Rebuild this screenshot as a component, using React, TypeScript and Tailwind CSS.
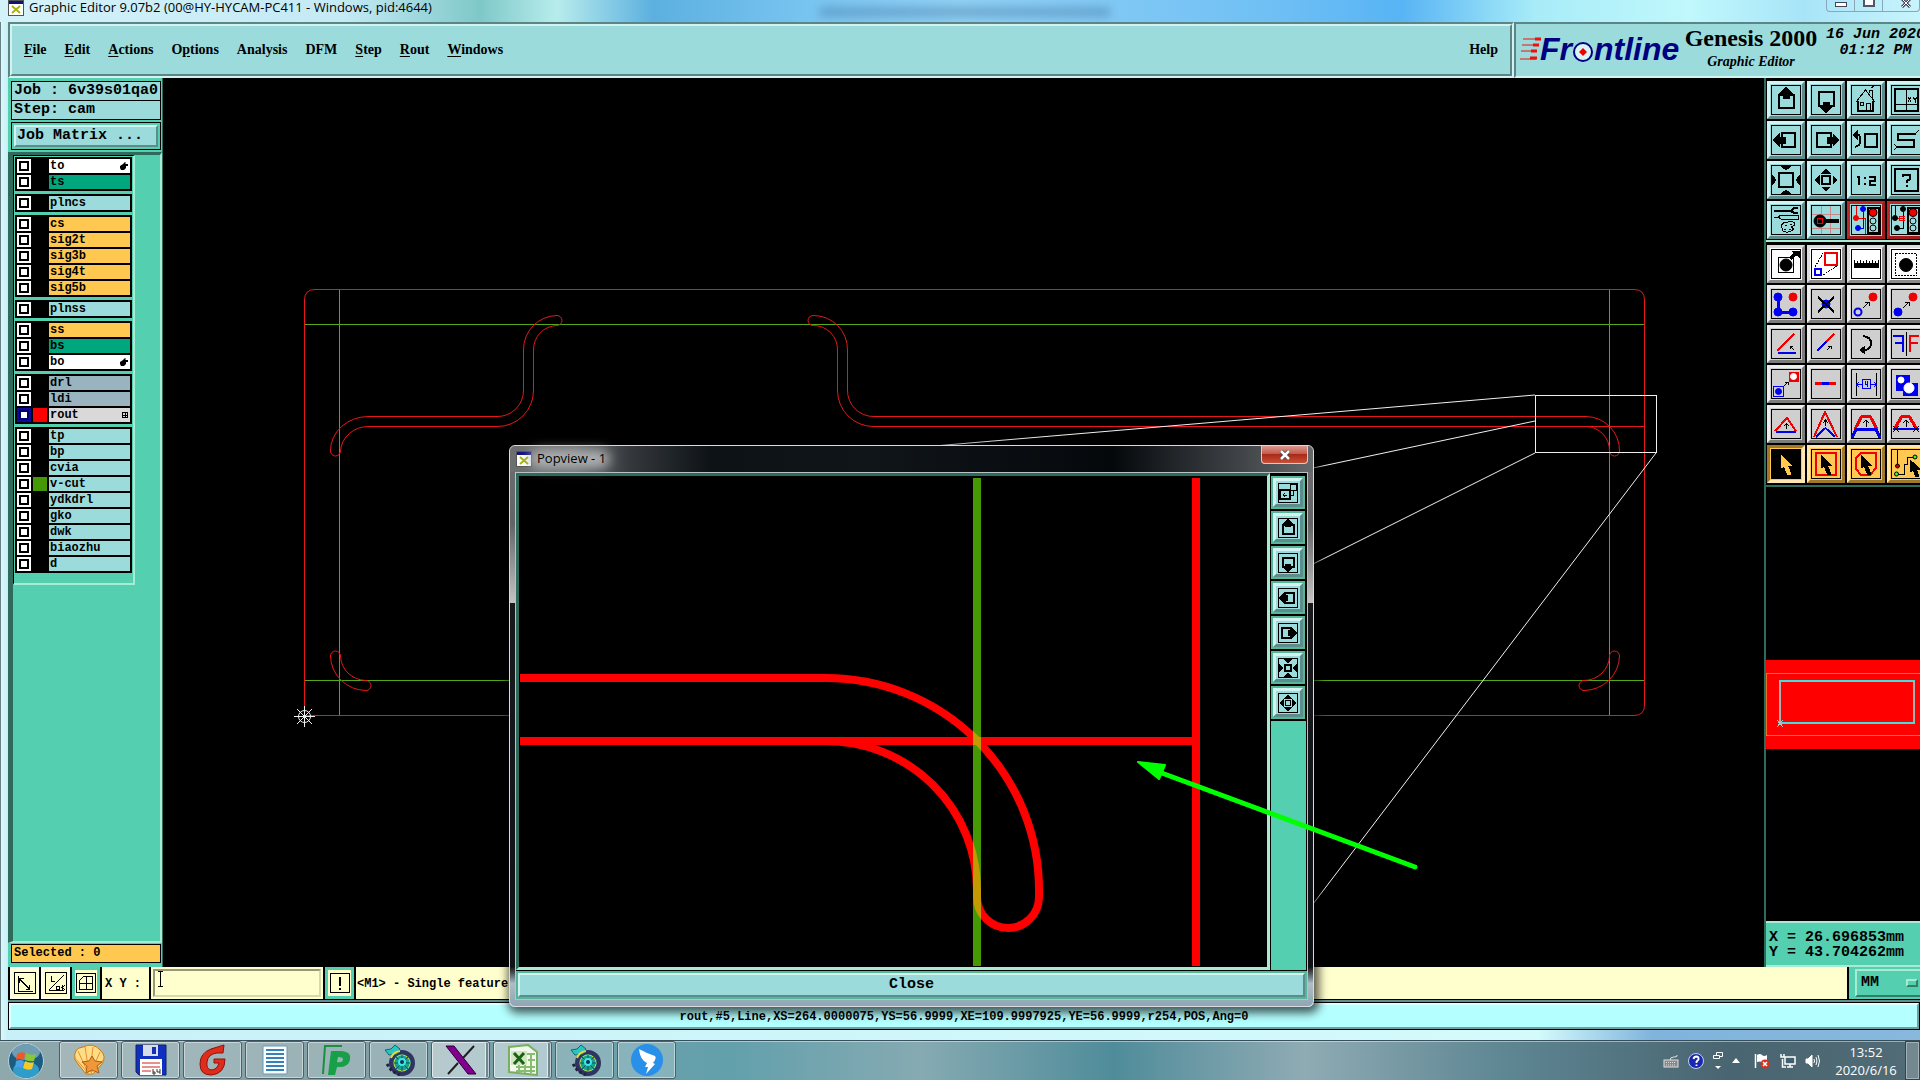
import type { ReactNode } from 'react';

type Tone = 'teal' | 'white' | 'gray' | 'red' | 'orange' | 'orangeDown';

const toneClass: Record<Tone, string> = {
  teal: 'bg-[#9bdbdb] border-t-[#d2f3f2] border-l-[#d2f3f2] border-b-[#5c8c8c] border-r-[#5c8c8c]',
  white: 'bg-white border-t-[#dcdcdc] border-l-[#dcdcdc] border-b-[#8a8a8a] border-r-[#8a8a8a]',
  gray: 'bg-[#cfcfcf] border-t-[#ededed] border-l-[#ededed] border-b-[#7c7c7c] border-r-[#7c7c7c]',
  red: 'bg-[#9bdbdb] border-t-[#c02828] border-l-[#c02828] border-b-[#a01c1c] border-r-[#a01c1c]',
  orange: 'bg-[#ffc850] border-t-[#ffe6b0] border-l-[#ffe6b0] border-b-[#a07828] border-r-[#a07828]',
  orangeDown: 'bg-[#ffc850] border-t-[#a07828] border-l-[#a07828] border-b-[#ffe6b0] border-r-[#ffe6b0]',
};

const RED = '#f00000';
const BLUE = '#0000f0';

const Icon = ({ children, className = 'h-8 w-8', fill = 'none' }: { children?: ReactNode; className?: string; fill?: string }) => (
  <svg
    viewBox="0 0 32 32"
    className={`[&_*]:[vector-effect:non-scaling-stroke] [&_circle]:[shape-rendering:auto] ${className}`}
    shapeRendering="crispEdges"
    fill="none"
    stroke="#000"
    strokeWidth="1"
    aria-hidden="true"
  >
    <rect x="1.5" y="1.5" width="29" height="29" fill={fill} />
    {children}
  </svg>
);

const PanUp = (
  <>
    <path d="M13 11H9V24H24V11H19" strokeWidth="2" />
    <path d="M16 3L22 9H19V14H13V9H10Z" fill="#000" />
  </>
);
const PanDown = (
  <>
    <path d="M13 22H9V8H24V22H19" strokeWidth="2" />
    <path d="M16 29L22 23H19V18H13V23H10Z" fill="#000" />
  </>
);
const PanLeft = (
  <>
    <path d="M12 13V9H25V23H12V19" strokeWidth="2" />
    <path d="M3 16L9 10V13H15V19H9V22Z" fill="#000" />
  </>
);
const PanRight = (
  <>
    <path d="M21 13V9H7V23H21V19" strokeWidth="2" />
    <path d="M29 16L23 10V13H17V19H23V22Z" fill="#000" />
  </>
);
const ZoomOut = (
  <>
    <rect x="9" y="9" width="14" height="14" strokeWidth="2" />
    <path d="M11 2H21L16 6ZM11 30H21L16 26ZM2 11V21L6 16ZM30 11V21L26 16Z" fill="#000" />
  </>
);
const ZoomIn = (
  <>
    <rect x="12" y="12" width="8" height="8" strokeWidth="2" />
    <path d="M16 5L20 9H12ZM16 27L20 23H12ZM5 16L9 12V20ZM27 16L23 12V20Z" fill="#000" />
  </>
);
const TrafficLight = (
  <>
    <rect x="17.5" y="3.5" width="11" height="25" strokeWidth="2" />
    <circle cx="23" cy="8.5" r="4" fill={RED} />
    <circle cx="23" cy="17" r="3" />
    <circle cx="23" cy="24" r="3" />
  </>
);
const Cursor = 'M11 7V20L14 18L18 27L21 26L17 17H21Z';

const viewTools: { name: string; tone?: Tone; fill?: string; art: ReactNode }[] = [
  { name: 'Pan up', art: PanUp },
  { name: 'Pan down', art: PanDown },
  {
    name: 'Home view',
    art: (
      <>
        <path d="M6 18L15.500 6L25 18M19 9V6H22V14M21 4L24 2" />
        <path d="M8 17V27H23V17" strokeWidth="2" />
        <path d="M16 27V19H20V27M10 18H13V21H10Z" />
      </>
    ),
  },
  {
    name: 'Coordinates view',
    art: (
      <>
        <rect x="5" y="5" width="23" height="22" strokeWidth="2" />
        <path d="M16.500 5V27M5 20.500H28" />
        <path d="M18 13l3 5m0-5l-3 5M23 13l2 3l2-3m-2 3v3" />
      </>
    ),
  },
  { name: 'Pan left', art: PanLeft },
  { name: 'Pan right', art: PanRight },
  {
    name: 'Previous view',
    art: (
      <>
        <rect x="15" y="10" width="12" height="13" strokeWidth="2" />
        <path d="M6 11H9Q12 16 9 21L5 23" strokeWidth="2" />
        <path d="M3 11L7 7V15Z" fill="#000" />
      </>
    ),
  },
  {
    name: 'Serpentine',
    art: (
      <>
        <path d="M26 10H8V16H24V23H7" strokeWidth="2" />
        <path d="M26 9L29 6M4 20L7 23L4 26" />
      </>
    ),
  },
  { name: 'Zoom out', art: ZoomOut },
  { name: 'Zoom in', art: ZoomIn },
  {
    name: 'Scale one to two',
    art: <path d="M7 13H9V21M14 13.500H16M14 19.500H16M19 13H25V17H20V21H26" strokeWidth="2" />,
  },
  {
    name: 'Query',
    art: (
      <>
        <rect x="5" y="5" width="23" height="22" strokeWidth="2" />
        <path d="M13 13V11H20V15L17 17V19M17 21V23" strokeWidth="2" />
      </>
    ),
  },
  {
    name: 'Setup',
    art: (
      <>
        <path d="M4 6.500H20M28 4H24L21 7L24 9H28" strokeWidth="2" />
        <path d="M4 13H8L11 11H28V15H11L8 13" />
        <path d="M12 24Q10 18 18 18Q26 17 25 21L21 23L24 25Q19 30 13 27Z" />
        <path d="M15 21H17M20 20H22M14 25H16M19 25H21" />
      </>
    ),
  },
  {
    name: 'Snap',
    art: (
      <>
        <path d="M11 2V30M20 2V30M2 10H30M2 24H30" stroke="#c88" />
        <circle cx="10" cy="17" r="6" fill="#000" />
        <path d="M16 17H29" strokeWidth="4" />
        <rect x="7.500" y="14.500" width="5" height="5" stroke={RED} />
      </>
    ),
  },
  {
    name: 'Net trace',
    tone: 'red',
    art: (
      <>
        <path d="M6 2V14H15V30" stroke={RED} />
        <path d="M13 5V24H8" stroke={BLUE} />
        <circle cx="6" cy="14" r="2.500" fill={RED} stroke={RED} />
        <circle cx="13" cy="5" r="2.500" fill={BLUE} stroke={BLUE} />
        <circle cx="8" cy="24" r="2.500" fill={BLUE} stroke={BLUE} />
        {TrafficLight}
      </>
    ),
  },
  {
    name: 'Net check',
    tone: 'red',
    art: (
      <>
        <path d="M5 2V14M13 5V24H7" />
        <path d="M7 14H9M9 12H15M9 14H15M9 16H15M9 12V16" stroke={RED} />
        <circle cx="5" cy="14" r="2.500" fill="#000" />
        <circle cx="13" cy="5" r="2.500" fill="#000" />
        <circle cx="7" cy="24" r="2.500" fill="#000" />
        {TrafficLight}
      </>
    ),
  },
];

const editTools: typeof viewTools = [
  {
    name: 'Select feature',
    tone: 'white',
    art: (
      <>
        <rect x="8.500" y="9.500" width="15" height="15" />
        <circle cx="16" cy="17" r="6" fill="#000" />
        <path d="M20 11L26 5" strokeWidth="3" />
        <path d="M22 3H29V9Z" fill="#000" />
      </>
    ),
  },
  {
    name: 'Copy scaled',
    tone: 'white',
    art: (
      <>
        <path d="M5 19L13 5M13 27L27 18" strokeDasharray="2 1" />
        <rect x="15" y="5" width="12" height="12" stroke={RED} strokeWidth="2" />
        <rect x="5" y="21" width="6" height="6" stroke={BLUE} strokeWidth="2" />
      </>
    ),
  },
  {
    name: 'Measure',
    tone: 'white',
    art: (
      <>
        <path d="M4 17.500H29" strokeWidth="5" />
        <path d="M4.500 12V16M28.500 12V16M7.500 13V16M10.500 12V16M13.500 13V16M16.500 12V16M19.500 13V16M22.500 12V16M25.500 13V16" />
      </>
    ),
  },
  {
    name: 'Select inside frame',
    tone: 'white',
    art: (
      <>
        <rect x="5.500" y="5.500" width="21" height="22" strokeDasharray="2 1" />
        <circle cx="16" cy="17" r="6.500" fill="#000" />
      </>
    ),
  },
  {
    name: 'Add chain',
    art: (
      <>
        <path d="M8 9V24H23" stroke={BLUE} strokeWidth="3" />
        <circle cx="8" cy="9" r="4" fill={BLUE} stroke={BLUE} />
        <circle cx="8" cy="24" r="4" fill={BLUE} stroke={BLUE} />
        <circle cx="23" cy="24" r="4" fill={BLUE} stroke={BLUE} />
        <circle cx="23" cy="9" r="4" fill={RED} stroke={RED} />
      </>
    ),
  },
  {
    name: 'Delete feature',
    art: (
      <>
        <circle cx="16" cy="16" r="4" fill={BLUE} stroke={BLUE} />
        <path d="M8 9L24 24M24 9L8 24" strokeWidth="2" />
      </>
    ),
  },
  {
    name: 'Move feature',
    art: (
      <>
        <circle cx="8" cy="24" r="3.500" stroke={BLUE} strokeWidth="2" />
        <circle cx="23" cy="9" r="4" fill={RED} stroke={RED} />
        <path d="M13 20L19 14M15 14H19V18" />
      </>
    ),
  },
  {
    name: 'Copy feature',
    art: (
      <>
        <circle cx="8" cy="24" r="4" fill={BLUE} stroke={BLUE} />
        <circle cx="23" cy="9" r="4" fill={RED} stroke={RED} />
        <path d="M13 20L19 14M15 14H19V18" />
      </>
    ),
  },
  {
    name: 'Rotate feature',
    art: (
      <>
        <path d="M7 23L24 6" stroke={RED} strokeWidth="2" />
        <path d="M8 25H26" stroke={BLUE} strokeWidth="2" />
        <path d="M24 22L20 18M20 21V18H23" />
      </>
    ),
  },
  {
    name: 'Stretch line',
    art: (
      <>
        <path d="M16 14L24 6" stroke={RED} strokeWidth="2" />
        <path d="M7 23L16 14" stroke={BLUE} strokeWidth="2" />
        <path d="M17 22L21 18M18 18H21V21" />
      </>
    ),
  },
  {
    name: 'Turn arc',
    art: (
      <>
        <path d="M13 8Q21 9 21 15Q21 22 14 22" strokeWidth="2" />
        <path d="M10 22L14 19V25Z" fill="#000" />
      </>
    ),
  },
  {
    name: 'Mirror feature',
    art: (
      <>
        <path d="M16.500 4V28" />
        <path d="M3 8H13V24M5 15H13" stroke={BLUE} strokeWidth="2" />
        <path d="M29 8H20V24M28 15H20" stroke={RED} strokeWidth="2" />
      </>
    ),
  },
  {
    name: 'Change symbol',
    art: (
      <>
        <rect x="19" y="4" width="9" height="9" fill={RED} stroke={RED} />
        <circle cx="23.500" cy="8.500" r="3" fill="#fff" stroke="#fff" />
        <rect x="3.500" y="18.500" width="10" height="10" stroke={BLUE} />
        <circle cx="8.500" cy="23.500" r="3" fill={BLUE} stroke={BLUE} />
        <path d="M14 18L18 14M15 14H18V17" />
      </>
    ),
  },
  {
    name: 'Break line',
    art: (
      <>
        <path d="M5 15.500H26" stroke={RED} strokeWidth="3" />
        <path d="M12 15.500H19" stroke={BLUE} strokeWidth="3" />
      </>
    ),
  },
  {
    name: 'Spacing',
    art: (
      <>
        <path d="M6.500 5V28M26.500 5V28" />
        <path d="M12.500 11.500H20.500V20.500H12.500ZM15.500 13V16.500H18M17.500 13V19M12 16.500H7M9 14L7 16.500L9 19M21 16.500H26M24 14L26 16.500L24 19" stroke={BLUE} />
      </>
    ),
  },
  {
    name: 'Polarity',
    art: (
      <>
        <path d="M6 7H19V15H27V27H13V22H6Z" fill={BLUE} stroke={BLUE} />
        <circle cx="11" cy="12" r="3" fill="#fff" stroke="#fff" />
        <circle cx="19" cy="20" r="5" fill="#fff" stroke="#fff" />
      </>
    ),
  },
  {
    name: 'Triangle corner',
    art: (
      <>
        <path d="M5 23L17 10L26 23" stroke={RED} strokeWidth="2" />
        <path d="M6 24H26" stroke={BLUE} strokeWidth="2" />
        <path d="M16.500 21V16M14 18L16.500 16L19 18" />
      </>
    ),
  },
  {
    name: 'Peak corner',
    art: (
      <>
        <path d="M4 29L15 4L27 29" stroke={RED} strokeWidth="2" />
        <path d="M6 29L15.500 20L25 29" stroke={BLUE} strokeWidth="2" />
        <path d="M15.500 18V12M13 15L15.500 12L18 15" />
      </>
    ),
  },
  {
    name: 'Trapeze spread',
    art: (
      <>
        <path d="M5 21L12 8H20L27 21" stroke={RED} strokeWidth="3" />
        <path d="M2 30L6 21H26L30 30" stroke={BLUE} strokeWidth="3" />
        <path d="M16 19V12M13 15L16 12L19 15" />
      </>
    ),
  },
  {
    name: 'Trapeze cut',
    art: (
      <>
        <path d="M5 20L12 8H19L26 20" stroke={RED} strokeWidth="3" />
        <path d="M3 21H29" stroke={BLUE} strokeWidth="2" />
        <path d="M16 19V12M13 15L16 12L19 15M3 18L9 24M9 18L3 24M23 18L29 24M29 18L23 24" />
      </>
    ),
  },
  {
    name: 'Select single',
    tone: 'orangeDown',
    fill: '#000',
    art: <path d={Cursor} fill="#ffc850" stroke="#ffc850" />,
  },
  {
    name: 'Select rectangle',
    tone: 'orange',
    art: (
      <>
        <rect x="6" y="5" width="20" height="22" stroke={RED} strokeWidth="2" />
        <path d={Cursor} fill="#000" />
      </>
    ),
  },
  {
    name: 'Select polygon',
    tone: 'orange',
    art: (
      <>
        <path d="M11 5H26V20L20 27H11L6 21V10Z" stroke={RED} strokeWidth="2" />
        <path d={Cursor} fill="#000" />
      </>
    ),
  },
  {
    name: 'Select net',
    tone: 'orange',
    art: (
      <>
        <path d="M7.500 2V17M7 26H14V16H17V9H25" />
        <circle cx="7.500" cy="18" r="2" fill="#c00" />
        <circle cx="6.500" cy="26" r="2" fill="#3f3" />
        <circle cx="25" cy="9" r="2" fill="#3f3" />
        <path d="M20 12V24L23 22L26 29L29 28L26 21H30Z" fill="#000" />
      </>
    ),
  },
];

type Layer = { name: string; color: string; swatch?: string; mark?: 'hand' | 'grid'; active?: boolean };

const AQUA = 'bg-[#9bdbdb]';
const AMBER = 'bg-[#ffc850]';
const GREEN = 'bg-[#00a67d]';
const SLATE = 'bg-[#9ab4bf]';

const layerGroups: Layer[][] = [
  [
    { name: 'to', color: 'bg-white', mark: 'hand' },
    { name: 'ts', color: GREEN },
  ],
  [{ name: 'plncs', color: AQUA }],
  [
    { name: 'cs', color: AMBER },
    { name: 'sig2t', color: AMBER },
    { name: 'sig3b', color: AMBER },
    { name: 'sig4t', color: AMBER },
    { name: 'sig5b', color: AMBER },
  ],
  [{ name: 'plnss', color: AQUA }],
  [
    { name: 'ss', color: AMBER },
    { name: 'bs', color: GREEN },
    { name: 'bo', color: 'bg-white', mark: 'hand' },
  ],
  [
    { name: 'drl', color: SLATE },
    { name: 'ldi', color: SLATE },
    { name: 'rout', color: 'bg-[#d9d9d9]', swatch: 'bg-[#ff0000]', mark: 'grid', active: true },
  ],
  [
    { name: 'tp', color: AQUA },
    { name: 'bp', color: AQUA },
    { name: 'cvia', color: AQUA },
    { name: 'v-cut', color: AQUA, swatch: 'bg-[#449905]' },
    { name: 'ydkdrl', color: AQUA },
    { name: 'gko', color: AQUA },
    { name: 'dwk', color: AQUA },
    { name: 'biaozhu', color: AQUA },
    { name: 'd', color: AQUA },
  ],
];

const LayerRow = ({ layer }: { layer: Layer }) => (
  <label className="flex h-[14px] items-center gap-[2px]">
    <input
      type="checkbox"
      className={`h-[14px] w-[14px] shrink-0 appearance-none border-2 bg-white ${
        layer.active ? 'border-[#0a0a9c] shadow-[inset_0_0_0_2px_#00006c]' : 'border-white shadow-[inset_0_0_0_2px_#000]'
      }`}
    />
    <span className={`h-[14px] w-[14px] shrink-0 ${layer.swatch ?? 'bg-black'}`} />
    <span className={`flex h-[14px] flex-1 items-center justify-between pr-[2px] pl-px text-[12px] leading-[14px] font-bold ${layer.color}`}>
      {layer.name}
      {layer.mark === 'hand' && (
        <svg viewBox="0 0 8 8" className="h-2 w-2" aria-hidden="true">
          <path d="M0 4L3 2L5 0L6 1L5 2H8V4H6V6L4 8H1L0 6Z" />
        </svg>
      )}
      {layer.mark === 'grid' && (
        <svg viewBox="0 0 6 6" className="h-[6px] w-[6px]" shapeRendering="crispEdges" fill="none" stroke="#000" aria-hidden="true">
          <path d="M.5.5H5.500V5.500H.5ZM3 0V6M0 3H6" />
        </svg>
      )}
    </span>
  </label>
);

const Sidebar = () => (
  <aside className="flex w-[155px] shrink-0 flex-col border-r border-[#2f6b5c] bg-[#54cfaf] pt-[3px] font-['Liberation_Mono',monospace] text-[15px] font-bold whitespace-nowrap">
    <div className="mr-px ml-[3px] border border-black bg-[#9bdbdb] pl-[2px] leading-[18px]">Job : 6v39s01qa0</div>
    <div className="mr-px ml-[3px] border border-t-0 border-black bg-[#9bdbdb] pl-[2px] leading-[18px]">Step: cam</div>
    <div className="mt-[2px] mr-px ml-[3px] border border-black p-[2px]">
      <button className="block h-[22px] w-full border-2 border-t-[#d2f3f2] border-r-[#5c8c8c] border-b-[#5c8c8c] border-l-[#d2f3f2] bg-[#9bdbdb] pl-px text-left leading-[18px]">
        Job Matrix ...
      </button>
    </div>
    <div className="mt-[2px] flex flex-1 flex-col border-t-[3px] border-r-2 border-b-2 border-l-[5px] border-t-[#2f6b5c] border-r-[#a8ead2] border-b-[#a8ead2] border-l-[#2f6b5c]">
      <div className="mr-[25px] flex flex-col gap-[3px] border-t border-r-2 border-b-2 border-l border-t-black border-r-[#a8ead2] border-b-[#a8ead2] border-l-black px-px pt-px pb-[10px]">
        {layerGroups.map((group, i) => (
          <div key={i} className="flex flex-col gap-[2px] bg-black p-[2px]">
            {group.map((layer) => (
              <LayerRow key={layer.name} layer={layer} />
            ))}
          </div>
        ))}
      </div>
    </div>
    <div className="mt-px mr-px mb-1 ml-[3px] border border-black bg-[#ffc850] pl-[2px] text-[12px] leading-[17px]">Selected : 0</div>
  </aside>
);

const menus: [string, string, string][] = [
  ['', 'F', 'ile'],
  ['', 'E', 'dit'],
  ['', 'A', 'ctions'],
  ['O', 'p', 'tions'],
  ['Analysis', '', ''],
  ['DFM', '', ''],
  ['', 'S', 'tep'],
  ['', 'R', 'out'],
  ['', 'W', 'indows'],
];

const Header = () => (
  <header className="flex h-14 shrink-0 font-['Liberation_Serif',serif] font-bold">
    <div className="flex-1 border-2 border-t-[#5c8585] border-r-[#d2f3f2] border-b-[#d2f3f2] border-l-[#5c8585]">
      <nav className="flex h-full items-center justify-between border-2 border-t-[#d2f3f2] border-r-[#5c8585] border-b-[#5c8585] border-l-[#d2f3f2] bg-[#9bdbdb] px-3 pb-[2px] text-[14px]">
        <div className="flex gap-[18px]">
          {menus.map(([before, key, after]) => (
            <button key={before + key + after}>
              {before}
              <span className="underline underline-offset-2">{key}</span>
              {after}
            </button>
          ))}
        </div>
        <button>Help</button>
      </nav>
    </div>
    <div className="flex w-[406px] shrink-0 gap-1 overflow-hidden border-t-2 border-b-2 border-l-2 border-t-[#5c8585] border-b-[#d2f3f2] border-l-[#5c8585] bg-[#9bdbdb] pl-1">
      <svg viewBox="0 0 160 52" className="h-[52px] w-40 shrink-0" role="img" aria-label="Frontline">
        <g stroke="#f01010" strokeWidth="1">
          <path d="M3 15H20M2 21H18M1 27H17M0 35H16" />
          <path d="M15 15H21M13 21H19M11 27H17M10 34H17" strokeWidth="3" />
        </g>
        <g fill="#000080" fontFamily="Liberation Sans, sans-serif" fontWeight="bold" fontStyle="italic" fontSize="32">
          <text x="20" y="36">
            Fr
          </text>
          <text x="74" y="36">
            ntline
          </text>
        </g>
        <circle cx="63" cy="28" r="9" fill="#d8f4f4" stroke="#000080" strokeWidth="2" />
        <path d="M63 24L67 28L63 32L59 28Z" fill="#f00000" />
      </svg>
      <div className="w-[134px] shrink-0 text-center">
        <div className="text-[24px] leading-7">Genesis 2000</div>
        <div className="text-[14px] leading-5 italic">Graphic Editor</div>
      </div>
      <div className="shrink-0 pt-[3px] pl-1 text-center font-['Liberation_Mono',monospace] text-[15px] leading-4 italic">
        <div>16 Jun 2020</div>
        <div>01:12 PM</div>
      </div>
    </div>
  </header>
);

const ToolGrid = ({ tools, tone }: { tools: typeof viewTools; tone: Tone }) => (
  <div className="grid grid-cols-[repeat(4,38px)] gap-[2px]">
    {tools.map((tool) => (
      <button key={tool.name} title={tool.name} className={`h-[38px] w-[38px] border-[3px] ${toneClass[tool.tone ?? tone]}`}>
        <Icon fill={tool.fill}>{tool.art}</Icon>
      </button>
    ))}
  </div>
);

const RightPanel = () => (
  <aside className="flex w-[156px] shrink-0 flex-col overflow-hidden border-l-2 border-[#2f6b5c] bg-black">
    <div className="border-b-2 border-[#a8ead2] pt-[3px] pb-px pl-px">
      <ToolGrid tools={viewTools} tone="teal" />
    </div>
    <div className="border-b-2 border-[#2f6b5c] pt-[3px] pb-[2px] pl-px">
      <ToolGrid tools={editTools} tone="gray" />
    </div>
    <div className="flex flex-1 items-center">
      <svg viewBox="0 0 154 89" className="h-[89px] w-[154px] shrink-0" shapeRendering="crispEdges" fill="none" aria-hidden="true">
        <rect width="154" height="89" fill="#ff0000" />
        <path d="M154 13.500H.5V75.500H154" stroke="#e07820" />
        <path d="M14 21V62M148 21V62" stroke="#b0b0b0" strokeWidth="2" />
        <path d="M13 21H149M13 63H149" stroke="#40e0e0" strokeWidth="2" />
        <path d="M11 60L17 67M17 60L11 67" stroke="#c0c0c0" />
      </svg>
    </div>
    <div className="h-[46px] border-t-2 border-b-2 border-[#a8ead2] bg-[#54cfaf] pt-[7px] pl-[3px] font-['Liberation_Mono',monospace] text-[15px] leading-[15px] font-bold whitespace-pre">
      <div>X = 26.696853mm</div>
      <div>Y = 43.704262mm</div>
    </div>
  </aside>
);

const Canvas = () => (
  <main className="relative min-w-0 flex-1 bg-black">
    <svg viewBox="163 78 1601 889" preserveAspectRatio="none" className="absolute inset-0 h-full w-full" fill="none" aria-hidden="true">
      <g stroke="#55a818">
        <path d="M304 324.500H1645M304 680.500H1645M339.500 289V716M1609.500 289V716" />
      </g>
      <g stroke="#e81818">
        <path d="M304.500 716V300Q304.500 289.500 315 289.500H1634Q1644.500 289.500 1644.500 300V705Q1644.500 715.500 1634 715.500H304.500" />
        <path d="M369 416.500H497A26 26 0 0 0 523.500 390V350A34 34 0 0 1 557 315.500A5 5 0 0 1 557 325.500A24 24 0 0 0 533.500 350V390A36 36 0 0 1 497 426.500H369A28 26 0 0 0 340.500 451A5 5 0 0 1 330.500 451A38 34 0 0 1 369 416.500" />
        <path d="M1586 416.500H874A26 26 0 0 1 847.500 390V350A34 34 0 0 0 813 315.500A5 5 0 0 0 813 325.500A24 24 0 0 1 837.500 350V390A36 36 0 0 0 874 426.500H1645" />
        <path d="M1586 416.500A34 34 0 0 1 1619.500 451A5 5 0 0 1 1609.500 451A24 24 0 0 0 1586 426.500" />
        <path d="M330.500 656A36 35 0 0 0 366 690.500A5 5 0 0 0 366 680.500A26 25 0 0 1 340.500 656A5 5 0 0 0 330.500 656Z" />
        <path d="M1619.500 656A36 35 0 0 1 1584 690.500A5 5 0 0 1 1584 680.500A26 25 0 0 0 1609.500 656A5 5 0 0 1 1619.500 656Z" />
      </g>
      <g stroke="#f0f0f0">
        <rect x="1535.500" y="395.500" width="121" height="57" />
        <path d="M1535 395L510 482M1535 421L1313 468M1535 453L1313 564M1656 453L1313 904" />
        <circle cx="304.500" cy="716.500" r="6" />
        <path d="M294 716.500H315M304.500 706V727M297 709L312 724M312 709L297 724" />
      </g>
    </svg>
  </main>
);

const CommandBar = () => (
  <div className="flex h-[33px] shrink-0 gap-[2px] border-b border-black bg-black pl-[2px] font-['Liberation_Mono',monospace] text-[12px] font-bold">
    <button title="Absolute" className="h-8 w-[29px] shrink-0 border-2 border-[#fffff0] bg-[#ffffce]">
      <Icon className="mx-auto h-6 w-6">
        <path d="M8 10L22 24M8 16V10H14M17 24H22V19M7 6V27H27" />
      </Icon>
    </button>
    <button title="Angle" className="h-8 w-[29px] shrink-0 border-2 border-[#fffff0] bg-[#ffffce]">
      <Icon className="mx-auto h-6 w-6">
        <path d="M6 26L26 6M6 26H26M10 7V14H14M17 20H21V24H17ZM24 19V25M28 19L24 22L28 25" />
      </Icon>
    </button>
    <button title="Grid" className="h-8 w-7 shrink-0 border-[3px] border-[#54cfaf] bg-[#ffffce]">
      <Icon className="mx-auto h-[22px] w-[22px]">
        <path d="M7 25V12L13 6H26V25ZM16 6V25M7 16H26" />
      </Icon>
    </button>
    <label htmlFor="xy" className="h-8 w-[47px] shrink-0 bg-[#ffffce] pl-[3px] leading-[34px] whitespace-pre">
      X Y :
    </label>
    <div className="relative h-8 w-[172px] shrink-0 bg-[#ffffce] p-[2px]">
      <input
        id="xy"
        className="h-7 w-full border-2 border-t-[#99997a] border-r-[#d8d8a8] border-b-[#d8d8a8] border-l-[#99997a] bg-[#ffffce] px-2 outline-none"
      />
      <svg viewBox="0 0 7 16" className="absolute top-1 left-[6px] h-4 w-[7px]" stroke="#000" fill="none" shapeRendering="crispEdges" aria-hidden="true">
        <path d="M1 .5H6M3.500 1V15M1 15.500H6" />
      </svg>
    </div>
    <button title="Alert" className="h-8 w-[29px] shrink-0 border-[3px] border-[#54cfaf] bg-[#ffffce]">
      <Icon className="mx-auto h-[22px] w-[22px]">
        <path d="M16 7V20M16 23V26" strokeWidth="2" />
      </Icon>
    </button>
    <div className="h-8 flex-1 bg-[#ffffce] pl-px leading-[34px]">&lt;M1&gt; - Single feature</div>
    <div className="relative h-8 w-[71px] shrink-0 overflow-hidden bg-[#54cfaf] pt-[2px] pl-[6px]">
      <select
        aria-label="Units"
        className="h-7 w-20 appearance-none border-2 border-t-[#a8ead2] border-r-[#2f7f68] border-b-[#2f7f68] border-l-[#a8ead2] bg-[#54cfaf] pl-1 text-[15px]"
      >
        <option>MM</option>
      </select>
      <span className="absolute top-3 right-[2px] h-2 w-3 border-2 border-t-[#a8ead2] border-r-[#2f7f68] border-b-[#2f7f68] border-l-[#a8ead2]" />
    </div>
  </div>
);

const StatusBar = () => (
  <div className="h-[30px] shrink-0 border-t-2 border-[#5f8f8f] bg-[#b4ffff]">
    <div className="h-7 border border-black">
      <div className="h-full border-2 border-t-[#dcffff] border-r-[#6f9f9f] border-b-[#6f9f9f] border-l-[#dcffff] pt-[3px] text-center font-['Liberation_Mono',monospace] text-[12px] leading-[18px] font-bold">
        rout,#5,Line,XS=264.0000075,YS=56.9999,XE=109.9997925,YE=56.9999,r254,POS,Ang=0
      </div>
    </div>
  </div>
);

const XIcon = () => (
  <svg viewBox="0 0 16 16" className="h-4 w-4 shrink-0" aria-hidden="true">
    <rect x=".5" y=".5" width="15" height="15" fill="#fff" stroke="#555" />
    <rect x="1" y="1" width="14" height="3" fill="#101080" />
    <path d="M4 6L12 13M12 6L4 13" stroke="#a8b410" strokeWidth="2" />
  </svg>
);

const popTools = [
  {
    name: 'Detach view',
    art: (
      <>
        <rect x="5" y="12" width="14" height="13" strokeWidth="2" />
        <rect x="20" y="4" width="8" height="8" />
        <path d="M19 19H24V12M9 19H15M12 16L9 19L12 22" />
      </>
    ),
  },
  { name: 'Popview pan up', art: PanUp },
  { name: 'Popview pan down', art: PanDown },
  { name: 'Popview pan left', art: PanLeft },
  { name: 'Popview pan right', art: PanRight },
  {
    name: 'Popview zoom out',
    art: (
      <>
        <rect x="12" y="12" width="8" height="8" strokeWidth="2" />
        <path d="M10 3H22L16 8ZM10 29H22L16 24ZM3 10V22L8 16ZM29 10V22L24 16Z" fill="#000" />
      </>
    ),
  },
  {
    name: 'Popview zoom in',
    art: (
      <>
        <rect x="12" y="12" width="8" height="8" />
        <path d="M16 4L21 9H11ZM16 28L21 23H11ZM4 16L9 11V21ZM28 16L23 11V21Z" fill="#000" />
      </>
    ),
  },
];

const routLoop = 'M520 678H826A213 212 0 0 1 1039 890V897A31 31 0 0 1 977 897V890A151 149 0 0 0 826 741';

const Popview = () => (
  <section className="absolute top-[445px] left-[509px] flex h-[562px] w-[805px] flex-col rounded-md border border-[#d8dcde] bg-[linear-gradient(180deg,#6c6e70_0%,#626466_14%,#c4c4c4_28%,#17191d_28%,#0e1216_93%,#aebdc8_96%,#8fa6b4_100%)] px-[5px] shadow-[2px_3px_10px_3px_rgba(0,0,0,0.65)]">
    <div className="relative -mx-[5px] flex h-[26px] shrink-0 items-center rounded-t-md bg-[linear-gradient(90deg,#6c6e70_0%,#6c6e70_8%,#34383c_15%,#0d1216_25%,#10151a_45%,#05080b_75%,#3c4044_90%,#66696b_100%)] pl-[6px]">
      <div className="absolute top-1 left-5 h-[18px] w-20 rounded-full bg-[#b0b2b4] blur-[6px]" />
      <XIcon />
      <h1 className="relative ml-[5px] flex-1 text-[13px]">Popview - 1</h1>
      <button
        aria-label="Close window"
        className="mr-[5px] flex h-[18px] w-[47px] items-center justify-center self-start rounded-b border border-t-0 border-[#e8c8c0] bg-[linear-gradient(180deg,#d8988c_0%,#c4584a_48%,#a82a18_50%,#c85038_100%)]"
      >
        <svg viewBox="0 0 12 10" className="h-[10px] w-3" aria-hidden="true">
          <path d="M2 1L10 9M10 1L2 9" stroke="#444" strokeWidth="4" />
          <path d="M2 1L10 9M10 1L2 9" stroke="#fff" strokeWidth="2.500" />
        </svg>
      </button>
    </div>
    <div className="mb-[6px] flex flex-1 flex-col border border-[#b8c4c4] bg-black">
      <div className="flex flex-1">
        <div className="relative flex-1 border-[3px] border-t-[#2f6b5c] border-r-[#a8ead2] border-b-[#a8ead2] border-l-[#2f6b5c]">
          <svg viewBox="519 476 748 491" preserveAspectRatio="none" className="absolute inset-0 h-full w-full" fill="none" strokeWidth="8" aria-hidden="true">
            <defs>
              <clipPath id="vcut">
                <rect x="973" y="478" width="8" height="488" />
              </clipPath>
            </defs>
            <path d="M520 741H1196M1196 478V966" stroke="#ff0000" />
            <path d={routLoop} stroke="#ff0000" />
            <path d="M977 478V966" stroke="#449905" />
            <g clipPath="url(#vcut)" stroke="#c49a00">
              <path d={routLoop} />
              <path d="M520 741H1196" />
            </g>
          </svg>
        </div>
        <div className="ml-px flex w-[36px] flex-col gap-[2px] pt-[3px] pr-[2px]">
          {popTools.map((tool) => (
            <button key={tool.name} title={tool.name} className="h-[33px] w-[34px] shrink-0 border-2 border-[#54b898]">
              <span className={`flex h-full w-full items-center justify-center border-[3px] ${toneClass.teal}`}>
                <Icon className="h-[22px] w-[22px] shrink-0">{tool.art}</Icon>
              </span>
            </button>
          ))}
          <div className="w-[35px] flex-1 bg-[#54cfaf]" />
        </div>
      </div>
      <div className="mt-px border-2 border-[#54b898]">
        <button className="block h-6 w-full border-2 border-t-[#d2f3f2] border-r-[#5c8c8c] border-b-[#5c8c8c] border-l-[#d2f3f2] bg-[#9bdbdb] font-['Liberation_Mono',monospace] text-[15px] leading-5 font-bold">
          Close
        </button>
      </div>
    </div>
  </section>
);

const Gear = (
  <>
    <circle cx="19" cy="19" r="11" fill="#187078" stroke="#303460" strokeWidth="4" />
    <path d="M2 6L8 5L12 1L17 5L14 10L6 11Z" fill="#2cc4c0" stroke="#0b6b70" />
    <path d="M8 14Q10 8 17 7" stroke="#e8d840" strokeWidth="2" />
    <circle cx="19" cy="19" r="8" fill="#18a090" stroke="#b8d848" />
    <path d="M19 11V27M11 19H27M13 13L25 25M25 13L13 25" stroke="#0c5860" />
    <circle cx="19" cy="18" r="3" fill="#103060" stroke="#40e8e0" strokeWidth="2" />
    <path d="M4 20L9 27L17 31" stroke="#282040" strokeWidth="3" strokeDasharray="3 2" />
  </>
);

const taskIcons: { name: string; active?: boolean; art: ReactNode }[] = [
  {
    name: 'Shell',
    art: (
      <>
        <path d="M2 16Q0 4 10 3Q20 -2 27 6Q34 12 29 20L20 30H13Z" fill="#ffdc88" stroke="#c87810" />
        <path d="M15 29L2 14M15 29L5 7M16 28L12 3M17 28L20 3M18 28L27 8M18 29L31 15" stroke="#e89028" />
        <path d="M19 12L22 17L29 18L24 22L26 29L19 26L13 29L14 22L9 18L16 17Z" fill="#f09838" stroke="#b05c18" />
      </>
    ),
  },
  {
    name: 'Total Commander',
    art: (
      <>
        <path d="M1 1H31V31H4L1 28Z" fill="#1030c0" stroke="#102060" />
        <rect x="8" y="1" width="15" height="11" fill="#d8dce4" />
        <rect x="17" y="3" width="4" height="7" fill="#1030c0" />
        <rect x="5" y="15" width="22" height="16" fill="#fff" />
        <path d="M7 19H25M7 23H25M7 27H16" stroke="#d02020" />
        <path d="M18 25V30H20V28H18M22 25V28H25M25 25V30" stroke="#333" />
      </>
    ),
  },
  {
    name: 'G drawing',
    art: <path d="M27 1L14 5Q3 9 3 20Q3 31 14 31Q28 30 28 15H17V19H22Q20 26 14 26Q9 25 10 18Q11 10 20 9L26 9Z" fill="#e02c1c" stroke="#8c1408" />,
  },
  {
    name: 'Notepad',
    art: (
      <>
        <rect x="4" y="2" width="24" height="28" rx="1" fill="#f8fcff" stroke="#6898b0" />
        <path d="M7 6H25M7 10H25M7 14H25M7 18H25M7 22H25M7 26H25" stroke="#3880b8" strokeWidth="2" />
      </>
    ),
  },
  {
    name: 'P planner',
    art: (
      <>
        <path d="M2 30L4 2H21" stroke="#189040" strokeWidth="2" />
        <path d="M7 31L10 7H21Q31 8 29 16Q27 24 16 23L14 31ZM17 13L16 18Q22 19 22 15Q22 13 17 13Z" fill="#18a048" fillRule="evenodd" />
      </>
    ),
  },
  { name: 'CAM gear', art: Gear },
  {
    name: 'X server',
    active: true,
    art: (
      <>
        <path d="M1 2H9L31 30H23Z" fill="#800090" stroke="#300030" />
        <path d="M29 2L18 14M13 19L3 30" stroke="#202020" strokeWidth="2" />
      </>
    ),
  },
  {
    name: 'Excel',
    active: true,
    art: (
      <>
        <path d="M2 3L21 1L30 8V31L2 28Z" fill="#f2f8ee" stroke="#78b060" strokeWidth="2" />
        <path d="M15 10H28M9 23H28M9 27H28M21 16H28M12 21V29M18 21V29M24 10V29" stroke="#88bc70" strokeWidth="2" />
        <rect x="4" y="7" width="16" height="14" fill="#cfe6c0" />
        <path d="M7 9L17 20M17 9L7 20" stroke="#1c6018" strokeWidth="3" />
      </>
    ),
  },
  { name: 'CAM gear second', art: Gear },
  {
    name: 'DingTalk',
    art: (
      <>
        <circle cx="16" cy="16" r="16" fill="#2890e8" />
        <path d="M8 5Q15 9 24 12Q26 14 22 19L24 20L15 30L17 23H14L16 19Q9 16 8 5Z" fill="#fff" />
      </>
    ),
  },
];

const Taskbar = () => (
  <footer className="flex h-10 shrink-0 items-stretch border-t border-[#38505c] bg-[linear-gradient(90deg,#8fa8ac_0%,#7f9fa5_20%,#62a0ac_38%,#86aab2_48%,#4f8c9a_58%,#8fabb4_68%,#5f8794_78%,#496571_90%,#516c76_100%)] pl-[8px] font-['Open_Sans',sans-serif] shadow-[inset_0_1px_0_rgba(255,255,255,0.45)]">
    <button aria-label="Start" className="mr-[14px] w-[37px]">
      <svg viewBox="0 0 37 38" className="h-[38px] w-[37px]" aria-hidden="true">
        <circle cx="18" cy="19" r="17.500" fill="#1c5c80" stroke="#b8d4dc" />
        <ellipse cx="18" cy="28" rx="13" ry="8" fill="#38b8e8" opacity=".7" />
        <ellipse cx="18" cy="10" rx="14" ry="8" fill="#a8c8d4" opacity=".6" />
        <path d="M9 12Q13 9 17 11L16 18Q12 16 8 18Z" fill="#f05828" />
        <path d="M18 11Q23 14 28 12L26 19Q22 20 17 18Z" fill="#88c838" />
        <path d="M8 19Q12 17 16 19L14 26Q11 24 7 26Z" fill="#48a0e8" />
        <path d="M17 19Q22 22 26 20L24 27Q20 29 15 26Z" fill="#f8c828" />
      </svg>
    </button>
    <div className="flex flex-1 gap-[3px] pb-px">
      {taskIcons.map((app) => (
        <button
          key={app.name}
          aria-label={app.name}
          className={`flex w-[59px] items-center justify-center rounded-[3px] border border-[#4b6068] ${
            app.active
              ? 'bg-white/45 shadow-[inset_0_0_0_1px_rgba(255,255,255,0.6),inset_-3px_0_0_0_#6f868e,inset_-4px_0_0_0_rgba(255,255,255,0.6)]'
              : 'bg-white/20 shadow-[inset_0_0_0_1px_rgba(255,255,255,0.45)]'
          }`}
        >
          <svg viewBox="0 0 32 32" className="h-8 w-8" fill="none" aria-hidden="true">
            {app.art}
          </svg>
        </button>
      ))}
    </div>
    <div className="flex items-center gap-[9px] text-white">
      <svg viewBox="0 0 16 14" className="h-[14px] w-4" fill="none" stroke="#e0e0e0" aria-hidden="true">
        <rect x="1" y="6" width="14" height="7" fill="#888" />
        <path d="M3 8.500H13M3 11H13" strokeDasharray="1 1" />
        <path d="M7 6Q7 3 11 3T14 1" />
      </svg>
      <svg viewBox="0 0 16 16" className="h-4 w-4" aria-hidden="true">
        <circle cx="8" cy="8" r="7.500" fill="#1828b0" stroke="#c8d0f0" />
        <path d="M5.500 6Q6 3.500 8.500 3.500Q11 4 10.500 6.500L8.500 8.500V10M8.500 11.500V13" stroke="#fff" strokeWidth="1.800" fill="none" />
      </svg>
      <svg viewBox="0 0 10 18" className="h-[18px] w-[10px]" fill="none" stroke="#fff" aria-hidden="true">
        <path d="M3.500 3V.5H9.500V4.500H7M.5 3.500H6.500V6.500H.5Z" />
        <path d="M2 14H8L5 17Z" fill="#fff" stroke="none" />
      </svg>
      <svg viewBox="0 0 8 5" className="h-[5px] w-2" aria-hidden="true">
        <path d="M0 5L4 0L8 5Z" fill="#fff" />
      </svg>
      <svg viewBox="0 0 18 16" className="ml-1 h-4 w-[18px]" aria-hidden="true">
        <path d="M2.500 1V15" stroke="#fff" strokeWidth="1.500" />
        <path d="M4 2Q7 0 9 2T14 2V9Q11 10 9 9T4 9Z" fill="#fff" />
        <circle cx="12" cy="11" r="4.500" fill="#d83020" />
        <path d="M10 9L14 13M14 9L10 13" stroke="#fff" strokeWidth="1.500" />
      </svg>
      <svg viewBox="0 0 16 15" className="h-[15px] w-4" fill="none" stroke="#fff" strokeWidth="1.500" aria-hidden="true">
        <rect x="5" y="4" width="10" height="7" fill="#406070" />
        <path d="M7 14H13M10 11V14M2.500 6V14H6M1 1V4H4V1" />
      </svg>
      <svg viewBox="0 0 16 16" className="h-4 w-4" fill="none" stroke="#fff" aria-hidden="true">
        <path d="M1 6H3L7 2V14L3 10H1Z" fill="#fff" />
        <path d="M9 6Q10 8 9 10M11 4Q13 8 11 12M13 2Q16 8 13 14" />
      </svg>
    </div>
    <div className="ml-[6px] w-[78px] pt-[2px] text-center text-[13px] leading-[18px] text-white">
      <div>13:52</div>
      <div>2020/6/16</div>
    </div>
    <button aria-label="Show desktop" className="w-[15px] border border-[#2f4450] bg-white/20 shadow-[inset_0_0_0_1px_rgba(255,255,255,0.35)]" />
  </footer>
);

const TitleBar = () => (
  <div className="relative flex h-[22px] shrink-0 items-start overflow-hidden bg-[linear-gradient(90deg,#d4f2fa_0%,#c4eaf4_18%,#7fc8c8_25%,#b8ecec_29%,#5cb0e0_34%,#78c4f0_42%,#90d0f4_50%,#70c0f4_66%,#58b4f4_73%,#a8ecf8_80%,#c0f8fc_88%,#a8e4f8_94%,#c8f4fc_100%)] pl-[8px] text-[13px]">
    <div className="absolute top-2 left-[820px] h-2 w-[290px] bg-[#2c5c88]/40 blur-[5px]" />
    <div className="flex h-[15px] items-center">
      <XIcon />
      <h1 className="ml-[5px] leading-[15px]">Graphic Editor 9.07b2 (00@HY-HYCAM-PC411 - Windows, pid:4644)</h1>
    </div>
    <div className="ml-auto flex h-3 shrink-0 rounded-b border border-t-0 border-[#88a8b8]">
      <button aria-label="Minimize" className="flex w-7 justify-center border-r border-[#88a8b8]">
        <span className="mt-[2px] h-[5px] w-3 border border-[#445] bg-white" />
      </button>
      <button aria-label="Maximize" className="flex w-7 justify-center border-r border-[#88a8b8]">
        <span className="h-[7px] w-3 border-2 border-t-0 border-[#556] bg-white" />
      </button>
      <button aria-label="Close" className="flex w-[36px] justify-end">
        <svg viewBox="0 0 10 8" className="mr-2 h-2 w-[10px]" aria-hidden="true">
          <path d="M1 -1L9 7M9 -1L1 7" stroke="#445" strokeWidth="3" />
          <path d="M1 -1L9 7M9 -1L1 7" stroke="#fff" />
        </svg>
      </button>
    </div>
  </div>
);

export default function App() {
  return (
    <div className="relative flex h-screen w-full flex-col overflow-hidden bg-[#d0f4f8] font-['Open_Sans',sans-serif] text-black">
      <TitleBar />
      <div className="flex min-h-0 flex-1 flex-col border-l border-[#6c8088] bg-[linear-gradient(90deg,#d8fafc_0,#c8eef4_7px)] pl-[7px]">
        <Header />
        <div className="flex min-h-0 flex-1">
          <Sidebar />
          <Canvas />
          <RightPanel />
        </div>
        <CommandBar />
        <StatusBar />
        <div className="h-[10px] shrink-0 bg-[linear-gradient(90deg,#c8f0f8_0%,#d4fafc_80%,#80b4dc_86%,#88b8dc_100%)]" />
      </div>
      <Taskbar />
      <Popview />
      <svg viewBox="0 0 290 115" className="pointer-events-none absolute top-[757px] left-[1131px] h-[115px] w-[290px]" aria-hidden="true">
        <path d="M28 15L284 110" stroke="#00ff00" strokeWidth="5" strokeLinecap="round" />
        <path d="M7 5L34 8L28 22Z" fill="#00ff00" stroke="#00ff00" strokeWidth="2" strokeLinejoin="round" />
      </svg>
    </div>
  );
}
